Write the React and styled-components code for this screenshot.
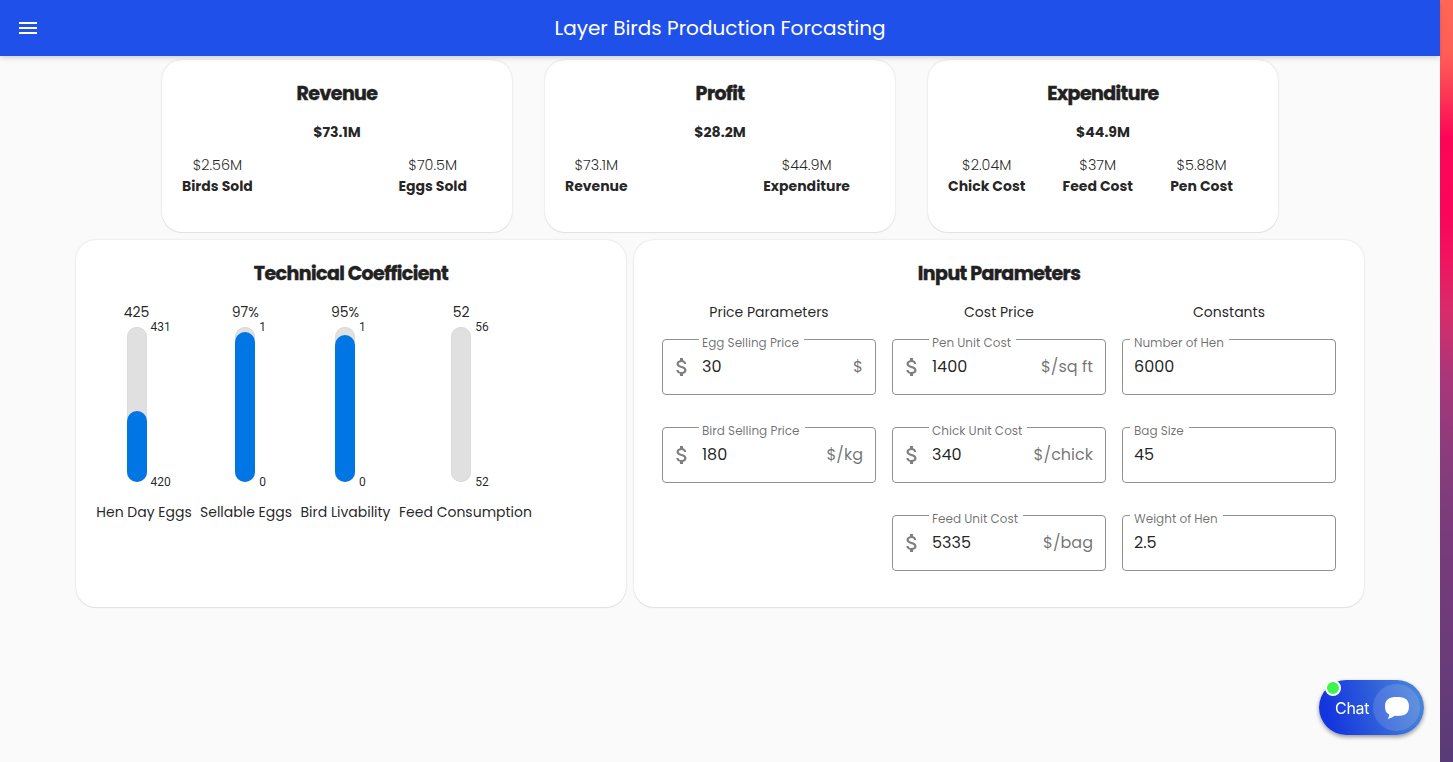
import React from "react";
import styled, { createGlobalStyle } from "styled-components";

const GlobalStyle = createGlobalStyle`
  *, *::before, *::after { box-sizing: border-box; }
  html, body { margin: 0; height: 100%; overflow: hidden; }
  body {
    background: linear-gradient(180deg, #ff6655 0%, #ff5f57 7%, #fc3a55 12%, #fb0657 18%, #fa0559 28%, #f0145f 34%, #d72c6b 41%, #ab3679 49%, #8b3c7d 59%, #7a3b7c 70%, #6c3b7a 86%, #583b78 100%);
    font-family: Poppins, Inter, "Open Sans", sans-serif;
    color: rgba(0, 0, 0, 0.87);
  }
`;

const Page = styled.div`
  width: calc(100vw - 13px);
  height: 100vh;
  background: #fafafa;
`;

const AppBar = styled.header`
  position: relative;
  display: grid;
  grid-template-columns: 56px 1fr 56px;
  align-items: center;
  height: 56px;
  background: #1f51ea;
  color: #fff;
  box-shadow: 0 2px 4px -1px rgba(0, 0, 0, 0.12), 0 3px 6px rgba(0, 0, 0, 0.07);
`;

const MenuButton = styled.button`
  display: flex;
  padding: 16px;
  border: 0;
  background: none;
  color: inherit;
`;

const AppTitle = styled.h1`
  margin: 0;
  text-align: center;
  font-size: 20px;
  font-weight: 400;
  line-height: 32px;
`;

const Main = styled.main`
  display: flex;
  flex-direction: column;
  align-items: center;
  gap: 8px;
  padding-top: 4px;
`;

const SummaryRow = styled.section`
  display: grid;
  grid-template-columns: repeat(3, 350px);
  gap: 33px;
`;

const DetailRow = styled.section`
  display: grid;
  grid-template-columns: 550px 730px;
  gap: 8px;
`;

const Card = styled.article`
  height: ${(p) => p.$height}px;
  padding-top: 20px;
  border-radius: 20px;
  background: #fff;
  box-shadow: 0 0 2px rgba(0, 0, 0, 0.16), 0 1px 1px rgba(0, 0, 0, 0.06);
`;

const CardTitle = styled.h3`
  margin: 0;
  text-align: center;
  font-size: 19px;
  font-weight: 700;
  line-height: 28px;
  letter-spacing: -0.58px;
  font-feature-settings: "liga" 1;
  -webkit-text-stroke: 0.4px #212121;
  color: #212121;
`;

const Total = styled.p`
  margin: 14px 0 12px;
  text-align: center;
  font-size: 14.1px;
  font-weight: 700;
  line-height: 21px;
`;

const Breakdown = styled.div`
  display: flex;
  justify-content: space-between;
  padding: 0 45px 0 20px;
  line-height: 21px;
`;

const BreakdownItem = styled.div`
  display: flex;
  flex-direction: column;
  align-items: center;
`;

const Amount = styled.span`
  font-size: 14.4px;
  font-weight: 300;
`;

const AmountLabel = styled.span`
  font-size: 14px;
  font-weight: 700;
`;

const Gauges = styled.div`
  display: flex;
  gap: 8px;
  padding: 14px 20px 0;
  font-size: 14px;
  line-height: 21px;
`;

const Gauge = styled.div`
  display: flex;
  flex-direction: column;
  width: ${(p) => p.$width}px;
  white-space: nowrap;
`;

const GaugeBody = styled.div`
  display: flex;
  flex-direction: column;
  align-items: center;
  padding-right: ${(p) => p.$inset}px;
`;

const GaugeMeter = styled.div`
  display: grid;
  grid-template-columns: 1fr 20px 1fr;
  column-gap: 4px;
  width: 100%;
  height: 155px;
  margin-top: 4px;
`;

const Track = styled.div`
  grid-column: 2;
  display: flex;
  align-items: flex-end;
  border-radius: 10px;
  background: #e0e0e0;
  box-shadow: inset 0 0 1px rgba(0, 0, 0, 0.2);
`;

const Fill = styled.div`
  width: 100%;
  height: ${(p) => p.$height}px;
  border-radius: 10px;
  background: #0075e4;
`;

const Scale = styled.div`
  display: flex;
  flex-direction: column;
  justify-content: space-between;
  margin: -7px 0;
  font-family: Roboto, sans-serif;
  font-size: 12px;
  line-height: 14px;
`;

const GaugeName = styled.span`
  margin-top: 20px;
  align-self: center;
`;

const Columns = styled.div`
  display: grid;
  grid-template-columns: repeat(3, 214px);
  gap: 16px;
  justify-content: center;
  padding-top: 14px;
`;

const Column = styled.div`
  display: flex;
  flex-direction: column;
`;

const ColumnTitle = styled.h4`
  margin: 0 0 16px;
  text-align: center;
  font-size: 14px;
  font-weight: 400;
  line-height: 21px;
`;

const FieldBox = styled.div`
  position: relative;
  display: flex;
  align-items: center;
  height: 56px;
  margin-bottom: 32px;
  padding: 0 12px 0 ${(p) => (p.$icon ? 7 : 11)}px;
  border: 1px solid #919191;
  border-radius: 4px;
  font-size: 16px;
  line-height: 24px;

  svg { margin-right: 8px; color: rgba(0, 0, 0, 0.5); }
`;

const FieldLabel = styled.label`
  position: absolute;
  top: -5px;
  left: ${(p) => (p.$icon ? 36 : 7)}px;
  padding: 0 5px 0 ${(p) => (p.$icon ? 3 : 4)}px;
  background: #fff;
  color: rgba(0, 0, 0, 0.56);
  font-size: 12px;
  line-height: 15px;
`;

const Unit = styled.span`
  margin-left: auto;
  color: rgba(0, 0, 0, 0.56);
`;

const ChatButton = styled.button`
  position: fixed;
  right: 29px;
  bottom: 27px;
  display: flex;
  align-items: center;
  justify-content: space-between;
  width: 105px;
  height: 55px;
  padding: 0 4px 0 16px;
  border: 0;
  border-radius: 28px;
  background: linear-gradient(75deg, #1334de 10%, #4a86d8 95%);
  box-shadow: 0 2px 4px rgba(0, 0, 0, 0.4);
  color: #fff;
  font: 400 16px/24px Inter, sans-serif;
  letter-spacing: -0.3px;
`;

const ChatCircle = styled.span`
  display: flex;
  align-items: center;
  justify-content: center;
  width: 47px;
  height: 47px;
  padding-top: 1px;
  border-radius: 50%;
  background: rgba(255, 255, 255, 0.13);
`;

const OnlineDot = styled.span`
  position: absolute;
  top: 0;
  left: 6px;
  width: 16px;
  height: 16px;
  border: 2px solid #fff;
  border-radius: 50%;
  background: #3df54b;
`;

const summaries = [
  { title: "Revenue", total: "$73.1M", items: [["$2.56M", "Birds Sold"], ["$70.5M", "Eggs Sold"]] },
  { title: "Profit", total: "$28.2M", items: [["$73.1M", "Revenue"], ["$44.9M", "Expenditure"]] },
  {
    title: "Expenditure",
    total: "$44.9M",
    items: [["$2.04M", "Chick Cost"], ["$37M", "Feed Cost"], ["$5.88M", "Pen Cost"]],
  },
];

const gauges = [
  { value: "425", name: "Hen Day Eggs", max: "431", min: "420", fill: 71, width: 96, inset: 15 },
  { value: "97%", name: "Sellable Eggs", max: "1", min: "0", fill: 150.5, width: 92, inset: 1.5 },
  { value: "95%", name: "Bird Livability", max: "1", min: "0", fill: 147.5, width: 91, inset: 1 },
  { value: "52", name: "Feed Consumption", max: "56", min: "52", fill: 0, width: 133, inset: 8.5 },
];

const columns = [
  {
    title: "Price Parameters",
    fields: [
      { label: "Egg Selling Price", value: "30", unit: "$", icon: true },
      { label: "Bird Selling Price", value: "180", unit: "$/kg", icon: true },
    ],
  },
  {
    title: "Cost Price",
    fields: [
      { label: "Pen Unit Cost", value: "1400", unit: "$/sq ft", icon: true },
      { label: "Chick Unit Cost", value: "340", unit: "$/chick", icon: true },
      { label: "Feed Unit Cost", value: "5335", unit: "$/bag", icon: true },
    ],
  },
  {
    title: "Constants",
    fields: [
      { label: "Number of Hen", value: "6000" },
      { label: "Bag Size", value: "45" },
      { label: "Weight of Hen", value: "2.5" },
    ],
  },
];

const MenuIcon = () => (
  <svg width="24" height="24" viewBox="0 0 24 24" fill="currentColor">
    <path d="M3 18h18v-2H3v2zm0-5h18v-2H3v2zm0-7v2h18V6H3z" />
  </svg>
);

const DollarIcon = () => (
  <svg width="24" height="24" viewBox="0 0 24 24" fill="currentColor">
    <path d="M11.8 10.9c-2.27-.59-3-1.2-3-2.15 0-1.09 1.01-1.85 2.7-1.85 1.78 0 2.44.85 2.5 2.1h2.21c-.07-1.72-1.12-3.3-3.21-3.81V3h-3v2.16c-1.94.42-3.5 1.68-3.5 3.61 0 2.31 1.91 3.46 4.7 4.13 2.5.6 3 1.48 3 2.41 0 .69-.49 1.79-2.7 1.79-2.06 0-2.87-.92-2.98-2.1h-2.2c.12 2.19 1.76 3.42 3.68 3.83V21h3v-2.15c1.95-.37 3.5-1.5 3.5-3.55 0-2.84-2.43-3.81-4.7-4.4z" />
  </svg>
);

const BubbleIcon = () => (
  <svg width="24" height="22" viewBox="0 0 24 22" fill="#fff">
    <path d="M12 0C19.5 0 24 2.2 24 9.6S19.5 19 12 19c-1 0-1.7-.05-2.4-.15C8 20.2 5.8 21.4 3.2 21.8c-.5.05-.6-.4-.3-.7 1-1 1.4-2.2 1.4-3.5C1.3 16.4 0 13.8 0 9.6 0 2.2 4.5 0 12 0z" />
  </svg>
);

const SummaryCard = ({ title, total, items }) => (
  <Card $height={172}>
    <CardTitle>{title}</CardTitle>
    <Total>{total}</Total>
    <Breakdown>
      {items.map(([amount, name]) => (
        <BreakdownItem key={name}>
          <Amount>{amount}</Amount>
          <AmountLabel>{name}</AmountLabel>
        </BreakdownItem>
      ))}
    </Breakdown>
  </Card>
);

const LevelGauge = ({ value, name, max, min, fill, width, inset }) => (
  <Gauge $width={width}>
    <GaugeBody $inset={inset}>
      <span>{value}</span>
      <GaugeMeter>
        <Track>{fill > 0 && <Fill $height={fill} />}</Track>
        <Scale>
          <span>{max}</span>
          <span>{min}</span>
        </Scale>
      </GaugeMeter>
    </GaugeBody>
    <GaugeName>{name}</GaugeName>
  </Gauge>
);

const Field = ({ label, value, unit, icon }) => (
  <FieldBox $icon={icon}>
    <FieldLabel $icon={icon}>{label}</FieldLabel>
    {icon && <DollarIcon />}
    <span>{value}</span>
    {unit && <Unit>{unit}</Unit>}
  </FieldBox>
);

export default function App() {
  return (
    <>
      <GlobalStyle />
      <Page>
        <AppBar>
          <MenuButton aria-label="Menu"><MenuIcon /></MenuButton>
          <AppTitle>Layer Birds Production Forcasting</AppTitle>
        </AppBar>
        <Main>
          <SummaryRow>
            {summaries.map((s) => <SummaryCard key={s.title} {...s} />)}
          </SummaryRow>
          <DetailRow>
            <Card $height={367}>
              <CardTitle>Technical Coefficient</CardTitle>
              <Gauges>
                {gauges.map((g) => <LevelGauge key={g.name} {...g} />)}
              </Gauges>
            </Card>
            <Card $height={367}>
              <CardTitle>Input Parameters</CardTitle>
              <Columns>
                {columns.map((c) => (
                  <Column key={c.title}>
                    <ColumnTitle>{c.title}</ColumnTitle>
                    {c.fields.map((f) => <Field key={f.label} {...f} />)}
                  </Column>
                ))}
              </Columns>
            </Card>
          </DetailRow>
        </Main>
      </Page>
      <ChatButton>
        <span>Chat</span>
        <ChatCircle><BubbleIcon /></ChatCircle>
        <OnlineDot />
      </ChatButton>
    </>
  );
}
